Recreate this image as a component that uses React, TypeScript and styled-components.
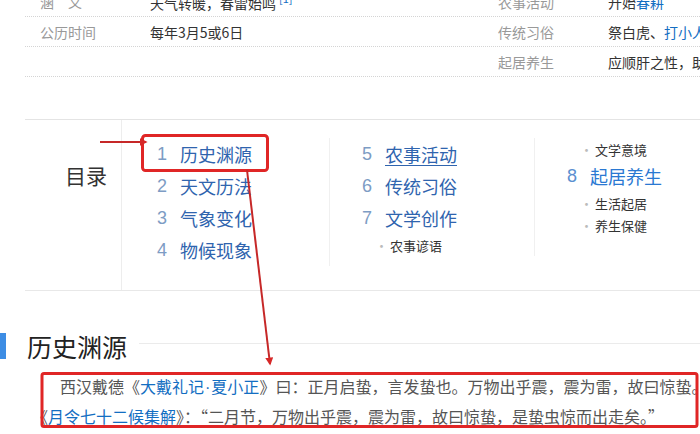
import React from 'react';
import styled, { createGlobalStyle } from 'styled-components';

const GlobalStyle = createGlobalStyle`
  html, body {
    margin: 0;
    padding: 0;
    background: #fff;
  }
  body {
    width: 700px;
    height: 434px;
    overflow: hidden;
    font-family: "Noto Sans CJK SC", "Liberation Sans", sans-serif;
  }
`;

const Page = styled.div`
  position: relative;
  width: 700px;
  height: 434px;
  overflow: hidden;
`;

/* ---------- basic info table ---------- */

const InfoTable = styled.div`
  margin: -13px 0 0 25px;
`;

const InfoRow = styled.div`
  display: grid;
  grid-template-columns: 110px 348px 110px 1fr;
  align-items: center;
  height: 29px;
  padding-left: 15px;
  border-bottom: 1px dotted #d4d4d4;
  font-size: 14px;
  white-space: nowrap;
  overflow: hidden;
`;

const InfoLabel = styled.span`
  color: #999;
`;

const InfoValue = styled.span`
  color: #333;
  overflow: hidden;
`;

const Link = styled.span`
  color: #136ec2;
`;

const Dot = styled.span`
  font-family: "Liberation Sans", sans-serif;
  margin: 0 1px;
`;

const Cite = styled.sup`
  color: #136ec2;
  font-size: 11px;
  margin-left: 3px;
`;

/* ---------- catalog ---------- */

const Catalog = styled.div`
  display: flex;
  height: 170px;
  margin: 42px 0 0 25px;
  border-top: 1px solid #e4e4e4;
  border-bottom: 1px solid #e8e8e8;
  overflow: hidden;
`;

const CatalogTitle = styled.div`
  flex-shrink: 0;
  box-sizing: border-box;
  width: 97px;
  padding: 40px 0 0 40px;
  border-right: 1px solid #ededed;
  font-size: 21px;
  line-height: 30px;
  color: #333;
  white-space: nowrap;
`;

const CatalogColumns = styled.div`
  display: flex;
  flex-shrink: 0;
  align-items: flex-start;
  padding: 18px 0 0 35px;
`;

const CatalogColumn = styled.div<{ $last?: boolean }>`
  flex-shrink: 0;
  width: 172px;
  margin-right: 32px;
  border-right: ${p => (p.$last ? 'none' : '1px solid #f0f0f0')};
`;

const Entry = styled.div`
  display: flex;
  align-items: center;
  height: 32px;
  font-size: 18px;
  white-space: nowrap;
`;

const EntryNo = styled.span<{ $bright?: boolean }>`
  width: 23px;
  font-family: "Liberation Sans", sans-serif;
  color: ${p => (p.$bright ? '#5b8fd0' : '#7d9cc4')};
`;

const EntryText = styled.span<{ $bright?: boolean; $underline?: boolean }>`
  color: ${p => (p.$bright ? '#2a78d2' : '#2f64ae')};
  text-decoration: ${p => (p.$underline ? 'underline' : 'none')};
  text-underline-offset: 3px;
`;

const SubEntry = styled.div`
  display: flex;
  align-items: center;
  height: 22px;
  padding-left: 13px;
  font-size: 13px;
  color: #333;
  white-space: nowrap;

  &::before {
    content: '·';
    width: 15px;
    color: #bbb;
  }
`;

/* ---------- section ---------- */

const SectionHead = styled.div`
  display: flex;
  align-items: center;
  height: 26px;
  margin-top: 42px;
`;

const SectionBar = styled.div`
  width: 6px;
  height: 26px;
  background: #3d8de4;
`;

const SectionTitle = styled.h2`
  margin: 0 0 0 21px;
  font-size: 25px;
  font-weight: 400;
  line-height: 26px;
  color: #222;
`;

const SectionRule = styled.div`
  flex: 1;
  height: 1px;
  margin: -6px 0 0 12px;
  background: #ebebeb;
`;

const Paragraph = styled.p`
  margin: 13px 0 0;
  padding-left: 32px;
  text-indent: 28px;
  font-size: 16px;
  line-height: 28px;
  color: #555;
  white-space: nowrap;
`;

const Overlay = styled.svg`
  position: absolute;
  left: 0;
  top: 0;
  pointer-events: none;
`;

const leftCol = [
  { no: 1, text: '历史渊源' },
  { no: 2, text: '天文历法' },
  { no: 3, text: '气象变化' },
  { no: 4, text: '物候现象' },
];

export default function App() {
  return (
    <Page>
      <GlobalStyle />

      <InfoTable>
        <InfoRow>
          <InfoLabel>涵　义</InfoLabel>
          <InfoValue>
            天气转暖，春雷始鸣<Cite>[1]</Cite>
          </InfoValue>
          <InfoLabel>农事活动</InfoLabel>
          <InfoValue>
            开始<Link>春耕</Link>
          </InfoValue>
        </InfoRow>
        <InfoRow>
          <InfoLabel>公历时间</InfoLabel>
          <InfoValue>每年3月5或6日</InfoValue>
          <InfoLabel>传统习俗</InfoLabel>
          <InfoValue>
            祭白虎、<Link>打小人</Link>
          </InfoValue>
        </InfoRow>
        <InfoRow>
          <InfoLabel />
          <InfoValue />
          <InfoLabel>起居养生</InfoLabel>
          <InfoValue>应顺肝之性，助益脾气</InfoValue>
        </InfoRow>
      </InfoTable>

      <Catalog>
        <CatalogTitle>目录</CatalogTitle>
        <CatalogColumns>
          <CatalogColumn>
            {leftCol.map(e => (
              <Entry key={e.no}>
                <EntryNo>{e.no}</EntryNo>
                <EntryText>{e.text}</EntryText>
              </Entry>
            ))}
          </CatalogColumn>
          <CatalogColumn>
            <Entry>
              <EntryNo>5</EntryNo>
              <EntryText $underline>农事活动</EntryText>
            </Entry>
            <Entry>
              <EntryNo>6</EntryNo>
              <EntryText>传统习俗</EntryText>
            </Entry>
            <Entry>
              <EntryNo>7</EntryNo>
              <EntryText>文学创作</EntryText>
            </Entry>
            <SubEntry>农事谚语</SubEntry>
          </CatalogColumn>
          <CatalogColumn $last>
            <SubEntry>文学意境</SubEntry>
            <Entry>
              <EntryNo $bright>8</EntryNo>
              <EntryText $bright>起居养生</EntryText>
            </Entry>
            <SubEntry>生活起居</SubEntry>
            <SubEntry>养生保健</SubEntry>
          </CatalogColumn>
        </CatalogColumns>
      </Catalog>

      <SectionHead>
        <SectionBar />
        <SectionTitle>历史渊源</SectionTitle>
        <SectionRule />
      </SectionHead>

      <Paragraph>
        西汉戴德《<Link>大戴礼记<Dot>·</Dot>夏小正</Link>》曰：正月启蛰，言发蛰也。万物出乎震，震为雷，故曰惊蛰。
        <br />
        《<Link>月令七十二候集解</Link>》：“二月节，万物出乎震，震为雷，故曰惊蛰，是蛰虫惊而出走矣。”
      </Paragraph>

      <Overlay width="700" height="434" viewBox="0 0 700 434">
        <defs>
          <marker id="head" viewBox="0 0 10 10" refX="8" refY="5" markerWidth="4" markerHeight="4" orient="auto">
            <path d="M0 0 L10 5 L0 10 z" fill="#d62828" />
          </marker>
        </defs>
        <rect x="142.5" y="135.5" width="125" height="35" rx="3" fill="none" stroke="#e02626" strokeWidth="3" />
        <line x1="100" y1="142" x2="146" y2="142" stroke="#c62828" strokeWidth="2" markerEnd="url(#head)" />
        <line x1="247" y1="170" x2="270" y2="364" stroke="#c62828" strokeWidth="2" markerEnd="url(#head)" />
        <rect x="42" y="373.5" width="655" height="53" rx="2" fill="none" stroke="#e02626" strokeWidth="3" />
      </Overlay>
    </Page>
  );
}
